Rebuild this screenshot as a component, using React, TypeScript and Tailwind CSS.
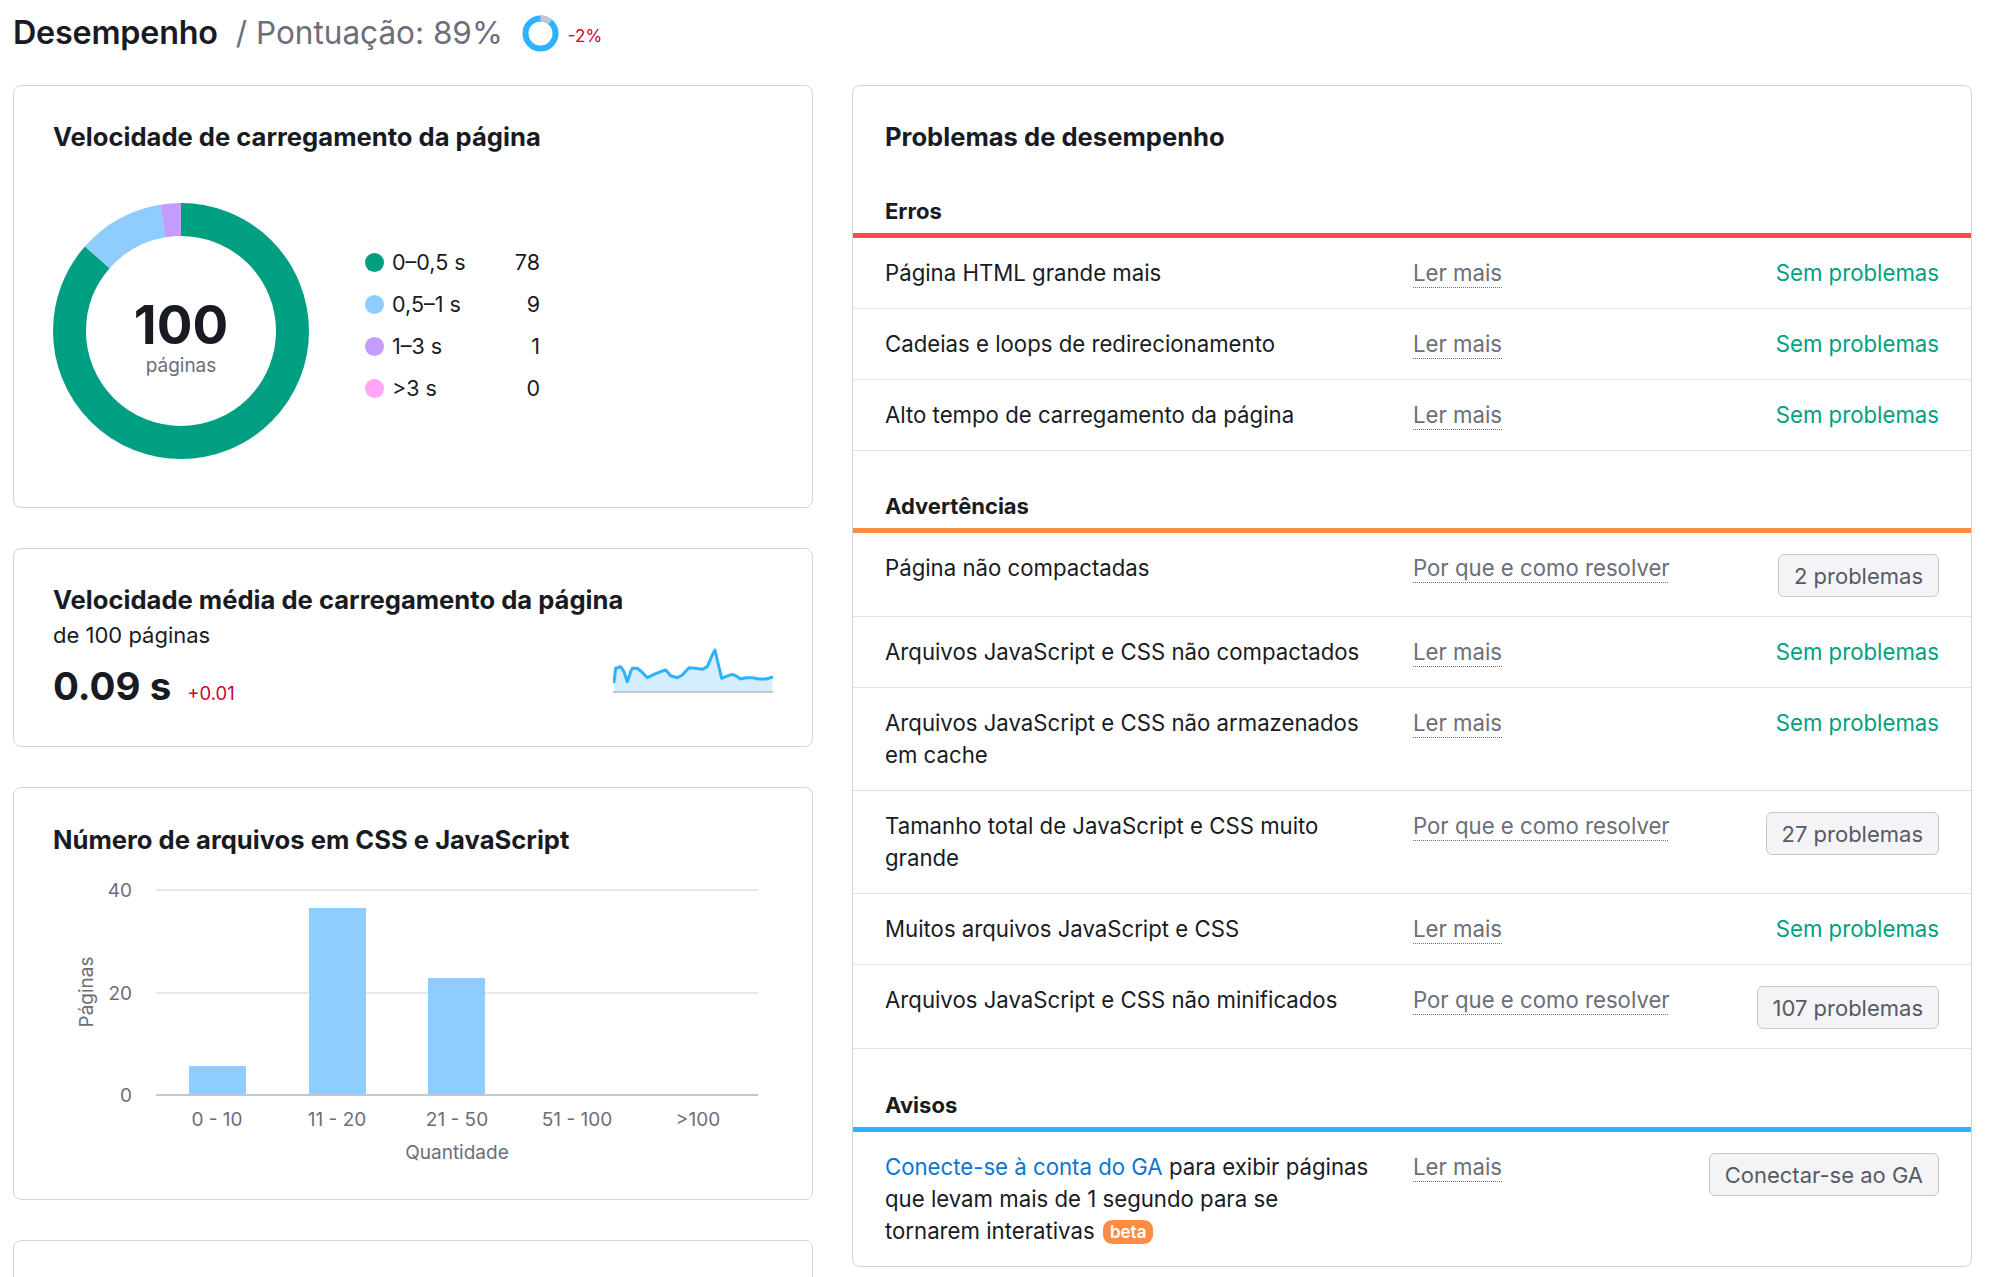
import React from "react";

// Desempenho (Site Audit) — performance overview: load-speed donut, average speed sparkline,
// CSS/JS file-count histogram on the left, and the issue list grouped by severity on the right.

type Status = { kind: "ok" } | { kind: "count"; label: string };

type Issue = {
  name: string;
  link: string;
  status: Status;
};

const ERRORS: Issue[] = [
  { name: "Página HTML grande mais", link: "Ler mais", status: { kind: "ok" } },
  { name: "Cadeias e loops de redirecionamento", link: "Ler mais", status: { kind: "ok" } },
  { name: "Alto tempo de carregamento da página", link: "Ler mais", status: { kind: "ok" } },
];

const WARNINGS: Issue[] = [
  { name: "Página não compactadas", link: "Por que e como resolver", status: { kind: "count", label: "2 problemas" } },
  { name: "Arquivos JavaScript e CSS não compactados", link: "Ler mais", status: { kind: "ok" } },
  { name: "Arquivos JavaScript e CSS não armazenados em cache", link: "Ler mais", status: { kind: "ok" } },
  { name: "Tamanho total de JavaScript e CSS muito grande", link: "Por que e como resolver", status: { kind: "count", label: "27 problemas" } },
  { name: "Muitos arquivos JavaScript e CSS", link: "Ler mais", status: { kind: "ok" } },
  { name: "Arquivos JavaScript e CSS não minificados", link: "Por que e como resolver", status: { kind: "count", label: "107 problemas" } },
];

const LEGEND = [
  { label: "0–0,5 s", value: 78, color: "bg-[#009f81]" },
  { label: "0,5–1 s", value: 9, color: "bg-[#8fccff]" },
  { label: "1–3 s", value: 1, color: "bg-[#c49bff]" },
  { label: ">3 s", value: 0, color: "bg-[#ffa7f6]" },
];

// sparkline points, traced from the reference (160 x 48 box)
const SPARK: [number, number][] = [
  [1, 36.7], [2.7, 23.3], [7.7, 21.7], [11, 26.7], [14.3, 36.7], [17.7, 26.7], [19.3, 23.3],
  [24.3, 23.3], [28.7, 26.7], [34.3, 32.7], [41, 29.3], [47.7, 26.7], [52.7, 25], [57.7, 30.7],
  [64.3, 32.7], [69.3, 30], [76, 22.7], [82.7, 23.3], [89.3, 24.3], [94.3, 21.7], [99.3, 10],
  [102, 5], [104.3, 15], [108.7, 33.3], [112.7, 31.7], [119.3, 29.3], [122.7, 30.7], [127.7, 34],
  [132.7, 32.7], [139.3, 32.7], [146, 34], [152.7, 34], [159.3, 32.3],
];

function ScoreRing() {
  const r = 15;
  const c = 2 * Math.PI * r;
  const gray = c * 0.11;
  return (
    <svg width="37" height="37" viewBox="0 0 37 37" className="shrink-0">
      <g transform="rotate(-90 18.5 18.5)">
        <circle cx="18.5" cy="18.5" r={r} fill="none" stroke="#2bb3ff" strokeWidth="6" />
        <circle
          cx="18.5"
          cy="18.5"
          r={r}
          fill="none"
          stroke="#c4c7cf"
          strokeWidth="6"
          strokeDasharray={`${gray} ${c}`}
        />
      </g>
    </svg>
  );
}

function Donut() {
  const r = 111.5;
  const c = 2 * Math.PI * r;
  // angles measured off the reference, in fractions of the circle
  const segs = [
    { from: 0, to: 0.864, color: "#009f81" },
    { from: 0.864, to: 0.973, color: "#8fccff" },
    { from: 0.973, to: 1, color: "#c49bff" },
  ];
  return (
    <div className="relative h-[256px] w-[256px] shrink-0">
      <svg width="256" height="256" viewBox="0 0 256 256" className="absolute inset-0">
        <g transform="rotate(-90 128 128)">
          {segs.map((s) => (
            <circle
              key={s.color}
              cx="128"
              cy="128"
              r={r}
              fill="none"
              stroke={s.color}
              strokeWidth="33"
              strokeDasharray={`${(s.to - s.from) * c} ${c}`}
              strokeDashoffset={-s.from * c}
            />
          ))}
        </g>
      </svg>
      <div className="relative flex h-full flex-col items-center justify-center pt-[16px]">
        <span className="text-[53px] font-bold leading-[50px] text-[#191b23]">100</span>
        <span className="mt-[4px] text-[19px] leading-[24px] text-[#6c6e79]">páginas</span>
      </div>
    </div>
  );
}

function Sparkline() {
  const line = SPARK.map(([x, y], i) => `${i === 0 ? "M" : "L"}${x} ${y}`).join(" ");
  const area = `${line} L159.3 46 L1 46 Z`;
  return (
    <svg width="160" height="48" viewBox="0 0 160 48" className="mt-[25px] shrink-0">
      <path d={area} fill="#d4eeff" />
      <path d={line} fill="none" stroke="#2bb3ff" strokeWidth="3" strokeLinejoin="round" strokeLinecap="round" />
      <line x1="0" y1="47" x2="160" y2="47" stroke="#c4c7cf" strokeWidth="2" />
    </svg>
  );
}

function FilesChart() {
  const bands = ["0 - 10", "11 - 20", "21 - 50", "51 - 100", ">100"];
  const centers = [164, 284, 404, 524, 645];
  const bars = [
    { x: 136, top: 195 },
    { x: 256, top: 37 },
    { x: 375, top: 107 },
  ];
  return (
    <svg width="720" height="300" viewBox="0 0 720 300" className="mt-[15px]">
      <line x1="103" y1="19" x2="705" y2="19" stroke="#e6e7eb" strokeWidth="2" />
      <line x1="103" y1="122" x2="705" y2="122" stroke="#e6e7eb" strokeWidth="2" />
      {bars.map((b) => (
        <rect key={b.x} x={b.x} y={b.top} width="57" height={224 - b.top} fill="#8fccff" />
      ))}
      <line x1="103" y1="224" x2="705" y2="224" stroke="#c4c7cf" strokeWidth="2" />
      {[
        { y: 19, t: "40" },
        { y: 122, t: "20" },
        { y: 224, t: "0" },
      ].map((l) => (
        <text key={l.t} x="79" y={l.y} textAnchor="end" dominantBaseline="central" fontSize="19" fill="#6c6e79">
          {l.t}
        </text>
      ))}
      <text
        x="33"
        y="121"
        transform="rotate(-90 33 121)"
        textAnchor="middle"
        dominantBaseline="central"
        fontSize="19"
        fill="#6c6e79"
      >
        Páginas
      </text>
      {bands.map((b, i) => (
        <text key={b} x={centers[i]} y="248" textAnchor="middle" dominantBaseline="central" fontSize="19" fill="#6c6e79">
          {b}
        </text>
      ))}
      <text x="404" y="281" textAnchor="middle" dominantBaseline="central" fontSize="19" fill="#6c6e79">
        Quantidade
      </text>
    </svg>
  );
}

function DottedLink({ children }: { children: React.ReactNode }) {
  return (
    <span className="text-[#6c6e79] underline decoration-[#6c6e79] decoration-dotted decoration-1 underline-offset-[6px]">
      {children}
    </span>
  );
}

function CountButton({ label }: { label: string }) {
  return (
    <button
      type="button"
      className="mt-[2px] h-[43px] whitespace-nowrap rounded-[6px] border border-[#c4c7cf] bg-[#f4f4f6] px-[15px] text-[22px] text-[#575a65]"
    >
      {label}
    </button>
  );
}

function IssueRow({ issue }: { issue: Issue }) {
  return (
    <div className="grid grid-cols-[492px_1fr_auto] items-start gap-x-[36px] border-b border-[#e0e1e9] px-8 py-[19px] text-[22.2px] leading-[32px]">
      <span className="text-[#191b23]">{issue.name}</span>
      <span>
        <DottedLink>{issue.link}</DottedLink>
      </span>
      {issue.status.kind === "ok" ? (
        <span className="text-right text-[#009f81]">Sem problemas</span>
      ) : (
        <CountButton label={issue.status.label} />
      )}
    </div>
  );
}

function SectionHead({ title, bar }: { title: string; bar: string }) {
  return (
    <div>
      <h3 className="px-8 pb-[8px] text-[22px] font-bold leading-[28px] text-[#191b23]">{title}</h3>
      <div className={`h-[5px] ${bar}`} />
    </div>
  );
}

export default function App() {
  return (
    <div className="h-[1277px] overflow-hidden bg-white pl-[13px] pr-[20px] font-[Inter,'Noto_Sans',sans-serif] text-[#191b23]">
      {/* page heading */}
      <div className="mb-[19px] flex h-[66px] items-center">
        <h1 className="text-[32.3px] font-semibold leading-[40px] tracking-[-0.2px]">Desempenho</h1>
        <span className="ml-[18px] text-[31.5px] leading-[40px] text-[#6c6e79]">/ Pontuação: 89%</span>
        <span className="ml-[19px] flex">
          <ScoreRing />
        </span>
        <span className="ml-[9px] mt-[8px] text-[17px] text-[#d1002f]">-2%</span>
      </div>

      <div className="flex gap-[39px]">
        {/* left column */}
        <div className="flex w-[800px] shrink-0 flex-col gap-[40px]">
          <section className="h-[423px] rounded-[8px] border border-[#d1d4db] pl-[39px] pt-[35px]">
            <h2 className="text-[25.6px] font-bold leading-[32px]">Velocidade de carregamento da página</h2>
            <div className="mt-[50px] flex">
              <Donut />
              <div className="ml-[56px] mt-[38px] w-[175px]">
                {LEGEND.map((l) => (
                  <div key={l.label} className="flex h-[42px] items-center text-[21.5px]">
                    <span className={`h-[19px] w-[19px] rounded-full ${l.color}`} />
                    <span className="ml-[8px]">{l.label}</span>
                    <span className="ml-auto">{l.value}</span>
                  </div>
                ))}
              </div>
            </div>
          </section>

          <section className="h-[199px] rounded-[8px] border border-[#d1d4db] px-[39px] pt-[35px]">
            <h2 className="text-[25.6px] font-bold leading-[32px]">Velocidade média de carregamento da página</h2>
            <div className="mt-1 flex justify-between">
              <div>
                <div className="text-[22px] leading-[30px]">de 100 páginas</div>
                <div className="mt-3 flex items-baseline">
                  <span className="text-[38.5px] font-bold leading-[48px]">0.09 s</span>
                  <span className="ml-[16px] text-[18.5px] text-[#d1002f]">+0.01</span>
                </div>
              </div>
              <Sparkline />
            </div>
          </section>

          <section className="h-[413px] rounded-[8px] border border-[#d1d4db] pl-[39px] pt-[36px]">
            <h2 className="text-[25.6px] font-bold leading-[32px]">Número de arquivos em CSS e JavaScript</h2>
            <FilesChart />
          </section>

          <section className="h-[240px] rounded-[8px] border border-[#d1d4db]" />
        </div>

        {/* right column: issues */}
        <section className="w-[1120px] self-start rounded-[8px] border border-[#d1d4db] pt-[35px]">
          <h2 className="px-8 text-[25.6px] font-bold leading-[32px]">Problemas de desempenho</h2>

          <div className="mt-[44px]">
            <SectionHead title="Erros" bar="bg-[#ff4953]" />
            {ERRORS.map((i) => (
              <IssueRow key={i.name} issue={i} />
            ))}
          </div>

          <div className="mt-[41px]">
            <SectionHead title="Advertências" bar="bg-[#ff8c43]" />
            {WARNINGS.map((i) => (
              <IssueRow key={i.name} issue={i} />
            ))}
          </div>

          <div className="mt-[42px]">
            <SectionHead title="Avisos" bar="bg-[#2bb3ff]" />
            <div className="grid grid-cols-[492px_1fr_auto] items-start gap-x-[36px] px-8 py-[19px] text-[22.2px] leading-[32px]">
              <p>
                <span className="text-[#0b75d1]">Conecte-se à conta do GA</span> para exibir páginas que levam mais
                de 1 segundo para se tornarem interativas{" "}
                <span className="ml-[2px] inline-block rounded-[9px] bg-[#ff8c43] px-[7px] align-[1px] text-[17px] font-semibold leading-[24px] text-white">
                  beta
                </span>
              </p>
              <span>
                <DottedLink>Ler mais</DottedLink>
              </span>
              <CountButton label="Conectar-se ao GA" />
            </div>
          </div>
        </section>
      </div>
    </div>
  );
}
